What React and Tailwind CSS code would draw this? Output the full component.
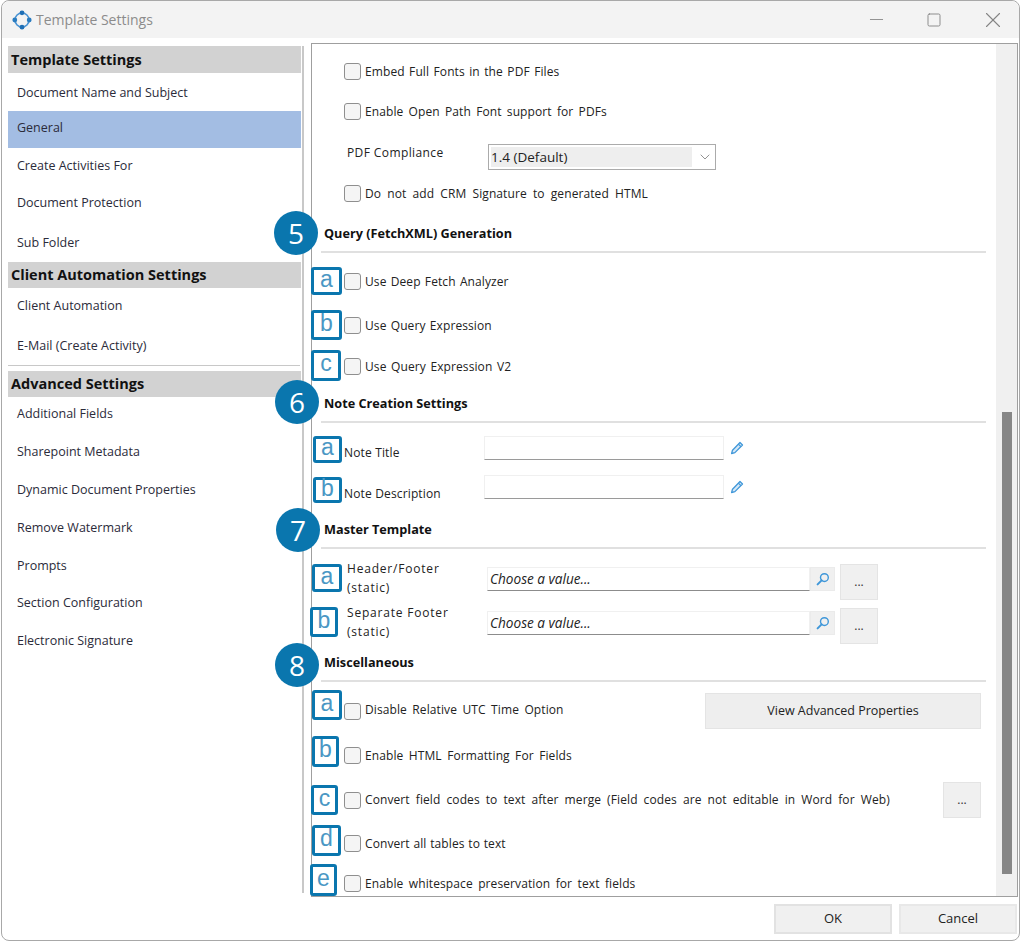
import { ChevronDown, Minus, Square, X } from "lucide-react";

const font = { fontFamily: "'Open Sans', 'Liberation Sans', sans-serif" };

const navItems = [
  { type: "head", label: "Template Settings", h: "h-[27px]" },
  { label: "Document Name and Subject", h: "h-[38px] pt-[2px]" },
  { label: "General", h: "h-[37px] pb-[3px]", active: true },
  { label: "Create Activities For", h: "h-[37px] pb-[1px]" },
  { label: "Document Protection", h: "h-[36px]" },
  { label: "Sub Folder", h: "h-[41px] pt-[4px]" },
  { type: "head", label: "Client Automation Settings", h: "h-[26px]" },
  { label: "Client Automation", h: "h-[35px] pt-[2px]" },
  { label: "E-Mail (Create Activity)", h: "h-[42px] pt-[4px]" },
  { type: "sep" },
  { type: "head", label: "Advanced Settings", h: "h-[26px]" },
  { label: "Additional Fields", h: "h-[34px]" },
  { label: "Sharepoint Metadata", h: "h-[39px] pt-[4px]" },
  { label: "Dynamic Document Properties", h: "h-[38px] pt-[2px]" },
  { label: "Remove Watermark", h: "h-[38px] pt-[2px]" },
  { label: "Prompts", h: "h-[38px] pt-[2px]" },
  { label: "Section Configuration", h: "h-[37px] pt-[2px]" },
  { label: "Electronic Signature", h: "h-[38px] pt-[2px]" },
];

const Logo = () => (
  <svg width="20" height="20" viewBox="0 0 20 20" fill="none">
    <circle cx="10" cy="10" r="7" stroke="#4a94d4" strokeWidth="1.6" />
    <circle cx="10" cy="2.8" r="2.4" fill="#1f6fb5" />
    <circle cx="10" cy="17.2" r="2.4" fill="#1f6fb5" />
    <circle cx="2.8" cy="10" r="2.4" fill="#2a7cc0" />
    <circle cx="17.2" cy="10" r="2.4" fill="#2a7cc0" />
  </svg>
);

const PencilIcon = () => (
  <svg width="14" height="14" viewBox="0 0 14 14" fill="none">
    <path d="M10 1.5l2.5 2.5-7.6 7.6-3.3.9.9-3.3z" fill="#d5e8f7" stroke="#3f97d9" strokeWidth="1.3" strokeLinejoin="round" />
    <path d="M8.4 3.1l2.5 2.5" stroke="#3f97d9" strokeWidth="1.2" />
  </svg>
);

const SearchIcon = () => (
  <svg width="14" height="14" viewBox="0 0 14 14" fill="none">
    <circle cx="8.4" cy="5.6" r="3.9" stroke="#3f97d9" strokeWidth="1.4" />
    <path d="M5.6 8.4L1.6 12.4" stroke="#3f97d9" strokeWidth="2" strokeLinecap="round" />
  </svg>
);

const Badge = ({ n, className }) => (
  <div className={`absolute z-10 flex h-[44px] w-[44px] items-center justify-center rounded-full bg-[#0a76ae] text-[28px] font-medium text-white ${className}`}>
    {n}
  </div>
);

const Tag = ({ letter, className }) => (
  <div
    className={`absolute z-10 flex items-center justify-center rounded-[3px] border-[3px] border-[#0a76ae] bg-white text-[23px] leading-none font-normal text-[#4a97c4] ${className}`}
    style={{ fontFamily: "'Liberation Sans', sans-serif" }}
  >
    <span className="relative -top-[2px]">{letter}</span>
  </div>
);

const Box = () => (
  <span className="h-[17px] w-[17px] shrink-0 rounded-[3px] border border-[#8f8f8f] bg-[#f5f5f5]" />
);

const Check = ({ label, spacing, className, children }) => (
  <div className={`relative flex h-[24px] items-center pl-[32px] ${className}`}>
    <Box />
    <span className={`ml-[4px] pt-[1px] text-[12px] tracking-[0.1px] whitespace-pre text-[#222] ${spacing}`}>{label}</span>
    {children}
  </div>
);

const Heading = ({ title, className, children }) => (
  <>
    <div className={`relative flex h-[20px] items-center pt-[1px] pl-[12px] text-[12.7px] font-bold text-[#111] ${className}`}>
      {title}
      {children}
    </div>
    <div className="mt-[8px] ml-[9px] h-[2px] w-[665px] bg-[#e0e0e0]" />
  </>
);

const DotsButton = ({ className }) => (
  <button className={`flex h-[36px] w-[38px] items-center justify-center border border-[#e4e4e4] bg-[#f0f0f0] text-[12px] text-[#333] ${className}`}>
    ...
  </button>
);

const LookupRow = ({ label, className, children }) => (
  <div className={`relative flex h-[36px] items-start pl-[35px] ${className}`}>
    <div className="-mt-[5px] w-[140px] text-[12px] leading-[19px] tracking-[0.8px] text-[#222]">
      {label[0]}
      <br />
      {label[1]}
    </div>
    <div className="mt-[3px] flex h-[24px] w-[323px] items-center border border-[#f0f0f0] border-b-[#8c8c8c] bg-white pt-[1px] pl-[2px] text-[13.6px] text-[#222] italic">
      Choose a value...
    </div>
    <div className="mt-[3px] flex h-[24px] w-[25px] items-center justify-center border border-[#ebebeb] bg-[#f0f0f0]">
      <SearchIcon />
    </div>
    <DotsButton className="ml-[5px]" />
    {children}
  </div>
);

const NoteRow = ({ label, labelTop, className, children }) => (
  <div className={`relative flex h-[24px] items-start pl-[32px] ${className}`}>
    <div className={`w-[140px] text-[12px] leading-[18px] tracking-[0.15px] text-[#222] ${labelTop}`}>{label}</div>
    <div className="h-[24px] w-[240px] border border-[#f0f0f0] border-b-[#9a9a9a] bg-white" />
    <div className="ml-[6px] pt-[5px]">
      <PencilIcon />
    </div>
    {children}
  </div>
);

export default function App() {
  return (
    <div className="h-[942px] w-[1024px] overflow-hidden bg-white pl-[1px] text-[#222]" style={font}>
      <div className="h-[941px] w-[1019px] rounded-t-[8px] rounded-b-[8px] border border-[#a8a8a8] bg-white">
        <div className="flex h-[37px] items-center rounded-t-[8px] bg-[#f3f3f3] pl-[10px]">
          <Logo />
          <span className="mb-[1px] ml-[4px] text-[14px] text-[#8c8c8c]">Template Settings</span>
          <div className="ml-auto flex items-center text-[#858585]">
            <Minus size={21} strokeWidth={1} />
            <Square size={16} strokeWidth={1.4} className="ml-[39px]" />
            <X size={26} strokeWidth={1} className="mr-[13px] ml-[38px]" />
          </div>
        </div>

        <div className="mt-[5px] flex h-[854px] pl-[6px]">
          <aside className="mt-[3px] h-[847px] w-[296px] border-r-2 border-[#c8c8c8] pr-[1px]">
            {navItems.map((item, i) => {
              if (item.type === "sep") {
                return <div key={i} className="mb-[5px] h-[1px] w-[292px] bg-[#c8c8c8]" />;
              }
              if (item.type === "head") {
                return (
                  <div key={i} className={`flex items-center bg-[#d2d2d2] pl-[3px] text-[14.5px] font-bold text-[#111] ${item.h}`}>
                    {item.label}
                  </div>
                );
              }
              return (
                <div key={i} className={`flex items-center pl-[9px] text-[12.5px] text-[#2b2b3a] ${item.h} ${item.active ? "bg-[#a3bde3]" : ""}`}>
                  {item.label}
                </div>
              );
            })}
          </aside>

          <main className="ml-[7px] flex h-[854px] w-[707px] border border-[#9f9f9f] bg-white">
            <div className="w-[684px] pt-[15px]">
              <Check label="Embed Full Fonts in the PDF Files" spacing="[word-spacing:1.2px]" />
              <Check label="Enable Open Path Font support for PDFs" spacing="[word-spacing:2px]" className="mt-[16px]" />

              <div className="mt-[21px] flex h-[26px] pl-[35px]">
                <div className="w-[141px] text-[12px] leading-[18px] tracking-[0.4px]">PDF Compliance</div>
                <div className="flex h-[26px] w-[228px] items-center border border-[#ababab] bg-white p-[2px]">
                  <div className="flex h-[20px] w-[201px] items-center bg-[#eeeeee] text-[13.5px] text-[#222]">1.4 (Default)</div>
                  <ChevronDown size={16} strokeWidth={1.2} className="ml-[5px] text-[#777]" />
                </div>
              </div>

              <Check label="Do not add CRM Signature to generated HTML" spacing="[word-spacing:2.9px]" className="mt-[11px]" />

              <Heading title="Query (FetchXML) Generation" className="mt-[18px]">
                <Badge n="5" className="top-[-12px] left-[-38px]" />
              </Heading>
              <Check label="Use Deep Fetch Analyzer" spacing="[word-spacing:1px]" className="mt-[16px]">
                <Tag letter="a" className="top-[-2px] left-[-1px] h-[28px] w-[31px]" />
              </Check>
              <Check label="Use Query Expression" spacing="[word-spacing:1px]" className="mt-[20px]">
                <Tag letter="b" className="top-[-3px] left-[-1px] h-[30px] w-[31px]" />
              </Check>
              <Check label="Use Query Expression V2" spacing="[word-spacing:1.3px]" className="mt-[17px]">
                <Tag letter="c" className="top-[-4px] left-[-1px] h-[31px] w-[30px]" />
              </Check>

              <Heading title="Note Creation Settings" className="mt-[15px]">
                <Badge n="6" className="top-[-13px] left-[-37px]" />
              </Heading>
              <NoteRow label="Note Title" labelTop="pt-[8px]" className="mt-[13px]">
                <Tag letter="a" className="top-0 left-[1px] h-[27px] w-[29px]" />
              </NoteRow>
              <NoteRow label="Note Description" labelTop="pt-[10px]" className="mt-[15px]">
                <Tag letter="b" className="top-[2px] left-[1px] h-[26px] w-[29px]" />
              </NoteRow>

              <Heading title="Master Template" className="mt-[20px]">
                <Badge n="7" className="top-[-11px] left-[-36px]" />
              </Heading>
              <LookupRow label={["Header/Footer", "(static)"]} className="mt-[15px]">
                <Tag letter="a" className="top-0 left-0 h-[28px] w-[30px]" />
              </LookupRow>
              <LookupRow label={["Separate Footer", "(static)"]} className="mt-[8px]">
                <Tag letter="b" className="top-[-1px] left-[-2px] h-[30px] w-[28px]" />
              </LookupRow>

              <Heading title="Miscellaneous" className="mt-[8px]">
                <Badge n="8" className="top-[-9px] left-[-37px]" />
              </Heading>

              <div className="relative mt-[11px] flex h-[36px] items-center pl-[32px]">
                <Box />
                <span className="mb-[2px] ml-[4px] text-[12px] tracking-[0.1px] text-[#222] [word-spacing:2.2px]">Disable Relative UTC Time Option</span>
                <button className="mr-[15px] ml-auto flex h-[36px] w-[276px] items-center justify-center border border-[#e4e4e4] bg-[#eeeeee] pt-[1px] text-[12.5px] text-[#222]">
                  View Advanced Properties
                </button>
                <Tag letter="a" className="top-[-3px] left-0 h-[30px] w-[30px]" />
              </div>
              <Check label="Enable HTML Formatting For Fields" spacing="[word-spacing:2.2px]" className="mt-[14px]">
                <Tag letter="b" className="top-[-7px] left-0 h-[31px] w-[27px]" />
              </Check>

              <div className="relative mt-[15px] flex h-[36px] items-center pl-[32px]">
                <Box />
                <span className="mb-[1px] ml-[4px] text-[12px] tracking-[0.1px] text-[#222] [word-spacing:2.8px]">
                  Convert field codes to text after merge (Field codes are not editable in Word for Web)
                </span>
                <DotsButton className="mr-[15px] ml-auto" />
                <Tag letter="c" className="top-[3px] left-[-1px] h-[30px] w-[27px]" />
              </div>
              <Check label="Convert all tables to text" spacing="[word-spacing:0.5px]" className="mt-[13px]">
                <Tag letter="d" className="top-[-6px] left-0 h-[31px] w-[29px]" />
              </Check>
              <Check label="Enable whitespace preservation for text fields" spacing="[word-spacing:2.2px]" className="mt-[16px]">
                <Tag letter="e" className="top-[-7px] left-[-2px] h-[32px] w-[27px]" />
              </Check>
            </div>

            <div className="w-[21px] bg-[#f0f0f0] px-[6px] pt-[368px]">
              <div className="h-[462px] w-[10px] bg-[#868686]" />
            </div>
          </main>
        </div>

        <div className="mt-[7px] flex justify-end gap-[7px] pr-[2px]">
          <button className="h-[30px] w-[118px] border-2 border-[#e2e2e2] bg-[#f0f0f0] text-[13px] text-[#222]">OK</button>
          <button className="h-[30px] w-[118px] border-2 border-[#e8e8e8] bg-[#f0f0f0] text-[13px] text-[#222]">Cancel</button>
        </div>
      </div>
    </div>
  );
}
